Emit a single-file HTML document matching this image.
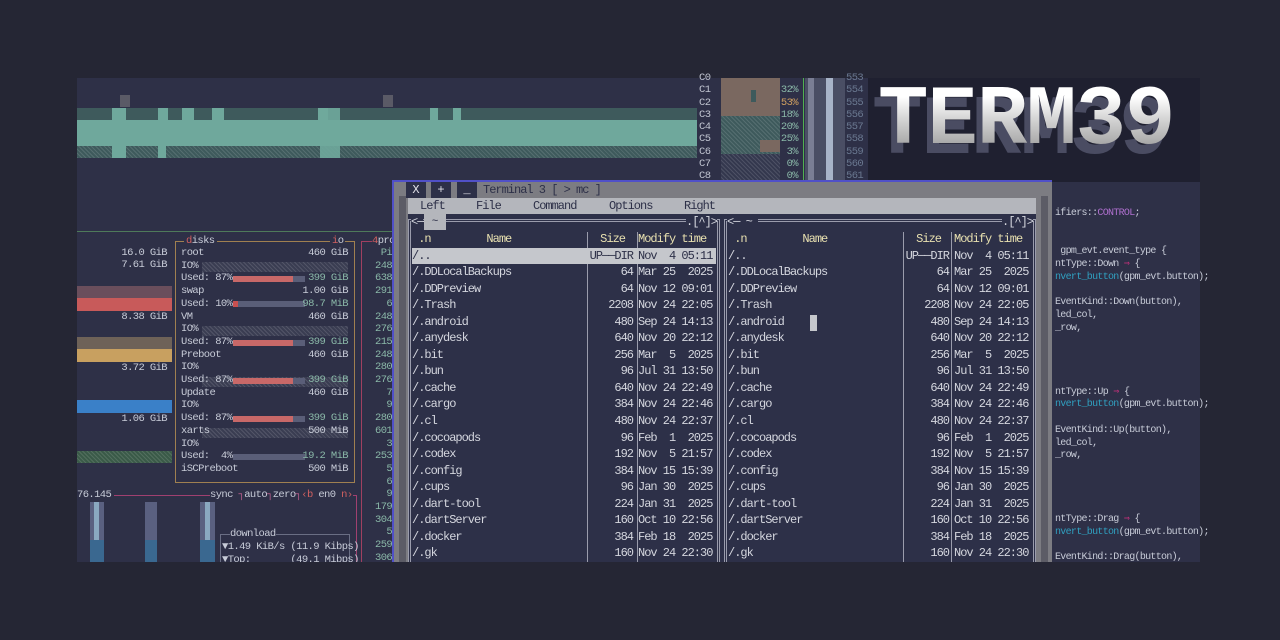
<!DOCTYPE html>
<html><head><meta charset="utf-8"><style>
*{margin:0;padding:0;box-sizing:border-box}
html,body{width:1280px;height:640px;overflow:hidden}
body{background:#252634;position:relative;font-family:"Liberation Mono","DejaVu Sans Mono",monospace}
.a{position:absolute}
.t{position:absolute;font-size:10.5px;line-height:12px;letter-spacing:-0.6px;white-space:pre;color:#c8ccd8}
.dot{background-image:repeating-linear-gradient(45deg,rgba(255,255,255,.12) 0 1px,transparent 1px 3px)}
.mc{position:absolute;font-family:"Liberation Mono",monospace;font-size:12px;letter-spacing:-1px;color:#d4d6de}
.lbl{position:absolute;font-family:"Liberation Mono",monospace;font-size:12px;letter-spacing:-1px;white-space:pre}
.r{display:flex;height:16.56px;line-height:16.56px;white-space:pre}
.n{width:174px}.s{width:47px;text-align:right}.d{width:76px;margin-left:5px}
.code{position:absolute;left:1055px;font-size:10px;letter-spacing:-0.7px;color:#c8ccd8;white-space:pre}
</style></head><body>
<!-- btop background -->
<div class="a" style="left:77px;top:78px;width:791px;height:484px;background:#2e3047"></div>
<!-- cpu graph -->
<div class="a" style="left:77px;top:108px;width:620px;height:13px;background:#3e5a5c"></div>
<div class="a" style="left:77px;top:120px;width:620px;height:26px;background:#6fa89c"></div>
<div class="a dot" style="left:77px;top:146px;width:620px;height:12px;background-color:#3e5a5c"></div>
<div class="a" style="left:112px;top:108px;width:14px;height:50px;background:#6fa89c"></div>
<div class="a" style="left:158px;top:108px;width:10px;height:13px;background:#6fa89c"></div>
<div class="a" style="left:158px;top:146px;width:8px;height:12px;background:#6fa89c"></div>
<div class="a" style="left:182px;top:108px;width:12px;height:13px;background:#6fa89c"></div>
<div class="a" style="left:212px;top:108px;width:12px;height:13px;background:#6fa89c"></div>
<div class="a" style="left:318px;top:108px;width:10px;height:13px;background:#6fa89c"></div>
<div class="a" style="left:320px;top:108px;width:20px;height:50px;background:#6fa89c;opacity:.9"></div>
<div class="a" style="left:430px;top:108px;width:8px;height:13px;background:#6fa89c"></div>
<div class="a" style="left:453px;top:108px;width:8px;height:13px;background:#6fa89c"></div>
<div class="a" style="left:120px;top:95px;width:10px;height:12px;background:#5a5a66"></div>
<div class="a" style="left:383px;top:95px;width:10px;height:12px;background:#5a5a66"></div>
<div class="a" style="left:77px;top:231px;width:315px;height:1px;background:#4e7a5a"></div>
<!-- cpu list -->
<div class="t" style="left:699px;top:72px;line-height:12.3px;color:#c0c4d0">C0
C1
C2
C3
C4
C5
C6
C7
C8</div>
<div class="a" style="left:721px;top:78px;width:59px;height:45px;background:#7a6860"></div>
<div class="a dot" style="left:721px;top:116px;width:59px;height:38px;background-color:#3e5a5c"></div>
<div class="a" style="left:751px;top:90px;width:5px;height:12px;background:#3e5a5c"></div>
<div class="a" style="left:760px;top:140px;width:20px;height:12px;background:#7a6860"></div>
<div class="a dot" style="left:721px;top:154px;width:59px;height:28px;background-color:#34384e"></div>
<div class="t" style="left:780px;top:72px;width:18px;text-align:right;line-height:12.3px;color:#8ab8a8">
32%
<span style="color:#d0a060">53%</span>
18%
20%
25%
3%
0%
0%</div>
<div class="a" style="left:805px;top:78px;width:40px;height:104px;background:#4a4e64"></div>
<div class="a" style="left:808px;top:78px;width:6px;height:104px;background:#7a7e94"></div>
<div class="a" style="left:826px;top:78px;width:7px;height:104px;background:#a8b4c8"></div>
<div class="a" style="left:803px;top:78px;width:1px;height:104px;background:#50b050"></div>
<div class="t" style="left:846px;top:72px;line-height:12.3px;color:#6a7890">553
554
555
556
557
558
559
560
561</div>
<!-- logo -->
<div class="a" style="left:868px;top:78px;width:332px;height:104px;background:#1f2030;overflow:hidden">
<div class="a" style="left:4px;top:4px;font-family:'Liberation Mono',monospace;font-weight:bold;font-size:84px;line-height:100px;letter-spacing:-1px;color:#4a4c62">TERM39</div>
<div class="a" style="left:10px;top:-6px;font-family:'Liberation Mono',monospace;font-weight:bold;font-size:84px;line-height:100px;letter-spacing:-1px;background:linear-gradient(#ffffff 25%,#d8d8d8 45%,#a8a8a8 72%,#7a7a7a);-webkit-background-clip:text;background-clip:text;color:transparent">TERM39</div>
</div>
<!-- mem left -->
<div class="t" style="left:77px;top:247px;width:90px;text-align:right">16.0 GiB
7.61 GiB</div>
<div class="a" style="left:77px;top:286px;width:95px;height:12px;background:#6a4e5c"></div>
<div class="a" style="left:77px;top:298px;width:95px;height:13px;background:#c85a5a"></div>
<div class="t" style="left:77px;top:311px;width:90px;text-align:right">8.38 GiB</div>
<div class="a" style="left:77px;top:337px;width:95px;height:12px;background:#6e6258"></div>
<div class="a" style="left:77px;top:349px;width:95px;height:13px;background:#c8a060"></div>
<div class="t" style="left:77px;top:362px;width:90px;text-align:right">3.72 GiB</div>
<div class="a" style="left:77px;top:400px;width:95px;height:13px;background:#3a80c8"></div>
<div class="t" style="left:77px;top:413px;width:90px;text-align:right">1.06 GiB</div>
<div class="a dot" style="left:77px;top:451px;width:95px;height:12px;background-color:#3a5a48"></div>
<!-- disks -->
<div class="a" style="left:175px;top:241px;width:180px;height:242px;border:1px solid #a08050"></div>
<div class="t" style="left:184px;top:235px;background:#2e3047;padding:0 2px"><span style="color:#d06060">d</span>isks</div>
<div class="t" style="left:330px;top:235px;background:#2e3047;padding:0 2px"><span style="color:#d06060">i</span>o</div>
<div class="a dot" style="left:202px;top:262px;width:146px;height:10px;background-color:#3a3d52"></div>
<div class="a dot" style="left:202px;top:326px;width:146px;height:10px;background-color:#3a3d52"></div>
<div class="a dot" style="left:202px;top:377px;width:146px;height:10px;background-color:#3a3d52"></div>
<div class="a dot" style="left:202px;top:428px;width:146px;height:10px;background-color:#3a3d52"></div>
<div class="a" style="left:233px;top:276px;width:72px;height:6px;background:#5a5e78"></div><div class="a" style="left:233px;top:276px;width:60px;height:6px;background:#c86868"></div>
<div class="a" style="left:233px;top:301px;width:72px;height:6px;background:#5a5e78"></div><div class="a" style="left:233px;top:301px;width:5px;height:6px;background:#c85050"></div>
<div class="a" style="left:233px;top:340px;width:72px;height:6px;background:#5a5e78"></div><div class="a" style="left:233px;top:340px;width:60px;height:6px;background:#c86868"></div>
<div class="a" style="left:233px;top:378px;width:72px;height:6px;background:#5a5e78"></div><div class="a" style="left:233px;top:378px;width:60px;height:6px;background:#c86868"></div>
<div class="a" style="left:233px;top:416px;width:72px;height:6px;background:#5a5e78"></div><div class="a" style="left:233px;top:416px;width:60px;height:6px;background:#c86868"></div>
<div class="a" style="left:233px;top:454px;width:72px;height:6px;background:#5a5e78"></div>
<div class="t" style="left:181px;top:247px;line-height:12.7px">root
IO%
Used: 87%
swap
Used: 10%
VM
IO%
Used: 87%
Preboot
IO%
Used: 87%
Update
IO%
Used: 87%
xarts
IO%
Used:  4%
iSCPreboot</div>
<div class="t" style="left:280px;top:247px;width:68px;text-align:right;line-height:12.7px">460 GiB

<span style="color:#8ab8a8">399 GiB</span>
1.00 GiB
<span style="color:#8ab8a8">98.7 MiB</span>
460 GiB

<span style="color:#8ab8a8">399 GiB</span>
460 GiB

<span style="color:#8ab8a8">399 GiB</span>
460 GiB

<span style="color:#8ab8a8">399 GiB</span>
500 MiB

<span style="color:#8ab8a8">19.2 MiB</span>
500 MiB</div>
<!-- proc -->
<div class="a" style="left:361px;top:241px;width:40px;height:321px;border-left:1px solid #a04060;border-top:1px solid #a04060"></div>
<div class="t" style="left:372px;top:235px;background:#2e3047"><span style="color:#d06060">4</span>pro</div>
<div class="t" style="left:375px;top:247px;line-height:12.7px;color:#8ab8a8"> Pi
248
638
291
  6
248
276
215
248
280
276
  7
  9
280
601
  3
253
  5
  6
  9
179
304
  5
259
306</div>
<!-- net -->
<div class="a" style="left:77px;top:495px;width:280px;height:67px;border-top:1px solid #a04070;border-right:1px solid #a04070"></div>
<div class="t" style="left:77px;top:489px;background:#2e3047;padding-right:3px">76.145</div>
<div class="t" style="left:210px;top:489px;background:#2e3047">sync <span style="color:#c06090">┐</span>auto<span style="color:#c06090">┐</span>zero<span style="color:#c06090">┐</span><span style="color:#d06060">‹b</span> en0 <span style="color:#d06060">n›</span></div>
<div class="a" style="left:90px;top:502px;width:14px;height:60px;background:#5a6080"></div><div class="a" style="left:94px;top:502px;width:5px;height:60px;background:#8aa8c0"></div><div class="a" style="left:90px;top:540px;width:14px;height:22px;background:#3a6890"></div>
<div class="a" style="left:145px;top:502px;width:12px;height:60px;background:#5a6080"></div><div class="a" style="left:145px;top:540px;width:12px;height:22px;background:#3a6890"></div>
<div class="a" style="left:200px;top:502px;width:15px;height:60px;background:#5a6080"></div><div class="a" style="left:205px;top:502px;width:5px;height:60px;background:#8aa8c0"></div><div class="a" style="left:200px;top:540px;width:15px;height:22px;background:#3a6890"></div>
<div class="a" style="left:220px;top:534px;width:130px;height:28px;border:1px solid #6a6e84;border-bottom:none"></div>
<div class="t" style="left:230px;top:528px;background:#2e3047">download</div>
<div class="t" style="left:222px;top:541px;line-height:12.5px">▼1.49 KiB/s (11.9 Kibps)
▼Top:       (49.1 Mibps)</div>
<!-- terminal window -->
<div class="a" style="left:392px;top:180px;width:660px;height:382px;background:#2d3048;border:2px solid #5050c8;border-bottom:none;border-right:none"></div>
<div class="a" style="left:394px;top:182px;width:658px;height:16px;background:#7c7c82"></div>
<div class="a" style="left:394px;top:182px;width:14px;height:380px;background:#7c7c82"></div>
<div class="a" style="left:399px;top:196px;width:7px;height:366px;background:#5c5c66"></div>
<div class="a" style="left:1036px;top:182px;width:16px;height:380px;background:#7c7c82"></div>
<div class="a" style="left:1041px;top:196px;width:7px;height:366px;background:#5c5c66"></div>
<div class="a" style="left:406px;top:182px;width:20px;height:16px;background:#2d3048;color:#e0e0e8;font-size:12px;text-align:center;line-height:16px">X</div>
<div class="a" style="left:431px;top:182px;width:20px;height:16px;background:#2d3048;color:#e0e0e8;font-size:12px;text-align:center;line-height:16px">+</div>
<div class="a" style="left:457px;top:182px;width:20px;height:16px;background:#2d3048;color:#e0e0e8;font-size:12px;text-align:center;line-height:16px">_</div>
<div class="lbl" style="left:483px;top:182px;line-height:16px;color:#2d3048">Terminal 3 [ &gt; mc ]</div>
<div class="a" style="left:408px;top:198px;width:628px;height:16px;background:#b4b6bc"></div>
<div class="lbl" style="left:420px;top:198px;line-height:16px;color:#2d3048">Left</div>
<div class="lbl" style="left:476px;top:198px;line-height:16px;color:#2d3048">File</div>
<div class="lbl" style="left:533px;top:198px;line-height:16px;color:#2d3048">Command</div>
<div class="lbl" style="left:609px;top:198px;line-height:16px;color:#2d3048">Options</div>
<div class="lbl" style="left:684px;top:198px;line-height:16px;color:#2d3048">Right</div>
<!-- panel frames -->
<div class="a" style="left:408px;top:219px;width:312px;height:343px;border:3px double #9a9cac;border-bottom:none"></div>
<div class="a" style="left:724px;top:219px;width:312px;height:343px;border:3px double #9a9cac;border-bottom:none"></div>
<div class="a" style="left:587px;top:232px;width:1px;height:330px;background:#9a9cac"></div>
<div class="a" style="left:637px;top:232px;width:1px;height:330px;background:#9a9cac"></div>
<div class="a" style="left:903px;top:232px;width:1px;height:330px;background:#9a9cac"></div>
<div class="a" style="left:951px;top:232px;width:1px;height:330px;background:#9a9cac"></div>
<div class="lbl" style="left:411px;top:214px;line-height:16px;background:#2d3048;color:#d4d6de">&lt;─</div>
<div class="a" style="left:424px;top:214px;width:22px;height:16px;background:#b4b6bc;color:#2d3048;font-size:11px;text-align:center;line-height:16px">~</div>
<div class="lbl" style="left:686px;top:214px;line-height:16px;background:#2d3048;color:#d4d6de">.[^]&gt;</div>
<div class="lbl" style="left:727px;top:214px;line-height:16px;background:#2d3048;color:#d4d6de">&lt;─ ~ </div>
<div class="lbl" style="left:1002px;top:214px;line-height:16px;background:#2d3048;color:#d4d6de">.[^]&gt;</div>
<div class="a" style="left:412px;top:248px;width:304px;height:16px;background:#c5c7cc"></div>
<div class="a" style="left:810px;top:315px;width:7px;height:16px;background:#c5c7cc"></div>
<div class="mc" style="left:412px;top:231px"><div class="r" style="color:#e8e0b0"><span class="n"> .n         Name</span><span class="s" style="text-align:center"> Size</span><span class="d">Modify time</span></div><div class="r" style="color:#2d3048"><span class="n">/..</span><span class="s">UP──DIR</span><span class="d">Nov  4 05:11</span></div><div class="r"><span class="n">/.DDLocalBackups</span><span class="s">64</span><span class="d">Mar 25  2025</span></div><div class="r"><span class="n">/.DDPreview</span><span class="s">64</span><span class="d">Nov 12 09:01</span></div><div class="r"><span class="n">/.Trash</span><span class="s">2208</span><span class="d">Nov 24 22:05</span></div><div class="r"><span class="n">/.android</span><span class="s">480</span><span class="d">Sep 24 14:13</span></div><div class="r"><span class="n">/.anydesk</span><span class="s">640</span><span class="d">Nov 20 22:12</span></div><div class="r"><span class="n">/.bit</span><span class="s">256</span><span class="d">Mar  5  2025</span></div><div class="r"><span class="n">/.bun</span><span class="s">96</span><span class="d">Jul 31 13:50</span></div><div class="r"><span class="n">/.cache</span><span class="s">640</span><span class="d">Nov 24 22:49</span></div><div class="r"><span class="n">/.cargo</span><span class="s">384</span><span class="d">Nov 24 22:46</span></div><div class="r"><span class="n">/.cl</span><span class="s">480</span><span class="d">Nov 24 22:37</span></div><div class="r"><span class="n">/.cocoapods</span><span class="s">96</span><span class="d">Feb  1  2025</span></div><div class="r"><span class="n">/.codex</span><span class="s">192</span><span class="d">Nov  5 21:57</span></div><div class="r"><span class="n">/.config</span><span class="s">384</span><span class="d">Nov 15 15:39</span></div><div class="r"><span class="n">/.cups</span><span class="s">96</span><span class="d">Jan 30  2025</span></div><div class="r"><span class="n">/.dart-tool</span><span class="s">224</span><span class="d">Jan 31  2025</span></div><div class="r"><span class="n">/.dartServer</span><span class="s">160</span><span class="d">Oct 10 22:56</span></div><div class="r"><span class="n">/.docker</span><span class="s">384</span><span class="d">Feb 18  2025</span></div><div class="r"><span class="n">/.gk</span><span class="s">160</span><span class="d">Nov 24 22:30</span></div></div>
<div class="mc" style="left:728px;top:231px"><div class="r" style="color:#e8e0b0"><span class="n"> .n         Name</span><span class="s" style="text-align:center"> Size</span><span class="d">Modify time</span></div><div class="r"><span class="n">/..</span><span class="s">UP──DIR</span><span class="d">Nov  4 05:11</span></div><div class="r"><span class="n">/.DDLocalBackups</span><span class="s">64</span><span class="d">Mar 25  2025</span></div><div class="r"><span class="n">/.DDPreview</span><span class="s">64</span><span class="d">Nov 12 09:01</span></div><div class="r"><span class="n">/.Trash</span><span class="s">2208</span><span class="d">Nov 24 22:05</span></div><div class="r"><span class="n">/.android</span><span class="s">480</span><span class="d">Sep 24 14:13</span></div><div class="r"><span class="n">/.anydesk</span><span class="s">640</span><span class="d">Nov 20 22:12</span></div><div class="r"><span class="n">/.bit</span><span class="s">256</span><span class="d">Mar  5  2025</span></div><div class="r"><span class="n">/.bun</span><span class="s">96</span><span class="d">Jul 31 13:50</span></div><div class="r"><span class="n">/.cache</span><span class="s">640</span><span class="d">Nov 24 22:49</span></div><div class="r"><span class="n">/.cargo</span><span class="s">384</span><span class="d">Nov 24 22:46</span></div><div class="r"><span class="n">/.cl</span><span class="s">480</span><span class="d">Nov 24 22:37</span></div><div class="r"><span class="n">/.cocoapods</span><span class="s">96</span><span class="d">Feb  1  2025</span></div><div class="r"><span class="n">/.codex</span><span class="s">192</span><span class="d">Nov  5 21:57</span></div><div class="r"><span class="n">/.config</span><span class="s">384</span><span class="d">Nov 15 15:39</span></div><div class="r"><span class="n">/.cups</span><span class="s">96</span><span class="d">Jan 30  2025</span></div><div class="r"><span class="n">/.dart-tool</span><span class="s">224</span><span class="d">Jan 31  2025</span></div><div class="r"><span class="n">/.dartServer</span><span class="s">160</span><span class="d">Oct 10 22:56</span></div><div class="r"><span class="n">/.docker</span><span class="s">384</span><span class="d">Feb 18  2025</span></div><div class="r"><span class="n">/.gk</span><span class="s">160</span><span class="d">Nov 24 22:30</span></div></div>
<!-- code pane -->
<div class="a" style="left:1052px;top:182px;width:148px;height:380px;background:#2e3047"></div>
<div class="code" style="top:208px;line-height:12.75px">ifiers::<span style="color:#b070d0">CONTROL</span>;


 gpm_evt.event_type {
ntType::Down <span style="color:#d03080">⇒</span> {
<span style="color:#30a0c0">nvert_button</span>(gpm_evt.button);

EventKind::Down(button),
led_col,
_row,




ntType::Up <span style="color:#d03080">⇒</span> {
<span style="color:#30a0c0">nvert_button</span>(gpm_evt.button);

EventKind::Up(button),
led_col,
_row,




ntType::Drag <span style="color:#d03080">⇒</span> {
<span style="color:#30a0c0">nvert_button</span>(gpm_evt.button);

EventKind::Drag(button),
led_col,
_row,</div>
<div class="a" style="left:0;top:562px;width:1280px;height:78px;background:#252634"></div>
</body></html>
